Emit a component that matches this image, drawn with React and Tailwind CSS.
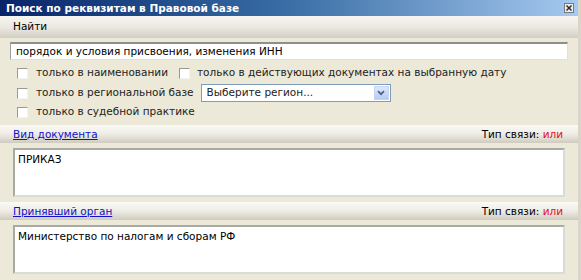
import React from "react";

const font = { fontFamily: '"DejaVu Sans", Verdana, sans-serif' };

function Check() {
  return (
    <span className="inline-block w-[11px] h-[11px] bg-white border border-t-[#9a9a94] border-l-[#9a9a94] border-b-[#f4f3ee] border-r-[#f4f3ee] shrink-0" />
  );
}

function SectionHeader({ title }) {
  return (
    <div className="h-[18px] shrink-0 flex items-center justify-between pl-[13px] pr-[15px] bg-gradient-to-b from-[#fbfaf7] via-[#eeece4] to-[#cfcbbf]">
      <a className="text-[#1010cc] underline text-[10.5px] leading-none">{title}</a>
      <span className="text-[10.5px] leading-none text-black">
        Тип связи: <span className="text-[#e0101c]">или</span>
      </span>
    </div>
  );
}

function Area({ text }) {
  return (
    <div className="ml-[13px] mr-[13px] h-[49px] shrink-0 bg-white border-2 border-t-[#a7aaa5] border-l-[#a7aaa5] border-b-[#d8dcd8] border-r-[#d8dcd8] px-[3px] pt-[3px] text-[10.5px] leading-[13px] text-black">
      {text}
    </div>
  );
}

export default function App() {
  return (
    <div
      className="w-[581px] h-[280px] bg-[#ece9d8] flex flex-col overflow-hidden border-r-[3px] border-[#d9d5c9]"
      style={font}
    >
      <div className="h-[16px] shrink-0 flex items-center justify-between pl-[6px] pr-[4px] bg-gradient-to-r from-[#0a246a] via-[#3a6ea5] to-[#a6caf0]">
        <span className="text-white font-bold text-[10.5px] leading-none">Поиск по реквизитам в Правовой базе</span>
        <span className="w-[10px] h-[10px] bg-[#ececec] border border-[#7a7a7a] flex items-center justify-center">
          <svg width="6" height="6" viewBox="0 0 6 6">
            <path d="M0.5 0.5 L5.5 5.5 M5.5 0.5 L0.5 5.5" stroke="#222" strokeWidth="1.4" />
          </svg>
        </span>
      </div>
      <div className="h-[22px] shrink-0 flex items-center pl-[13px] bg-gradient-to-b from-[#f6f5f0] via-[#ebe9e1] to-[#d2cec3] text-[10.5px] text-black">
        Найти
      </div>
      <div className="mt-[4px] ml-[10px] mr-[10px] h-[18px] shrink-0 bg-white border-t-2 border-t-[#8c8f8c] border-l border-l-[#a0a0a0] border-b border-b-[#e0e0e0] border-r border-r-[#e0e0e0] flex items-center pl-[5px] text-[10.5px] text-black">
        порядок и условия присвоения, изменения ИНН
      </div>
      <div className="pl-[17px] mt-[3px] flex flex-col text-[10.5px] text-[#222] shrink-0">
        <div className="h-[20px] flex items-center">
          <Check />
          <span className="ml-[8px]">только в наименовании</span>
          <span className="ml-[11px] flex"><Check /></span>
          <span className="ml-[7px]">только в действующих документах на выбранную дату</span>
        </div>
        <div className="h-[20px] flex items-center">
          <Check />
          <span className="ml-[8px]">только в региональной базе</span>
          <div className="ml-[7px] w-[190px] h-[18px] bg-white border border-[#7f9db9] flex items-center justify-between pl-[5px] pr-[1px]">
            <span>Выберите регион...</span>
            <span className="w-[15px] h-[14px] bg-gradient-to-b from-[#dfe8fb] to-[#b7cbf3] border border-[#c7d5f5] flex items-center justify-center">
              <svg width="8" height="6" viewBox="0 0 8 6">
                <path d="M1 1.2 L4 4.2 L7 1.2" stroke="#4d6185" strokeWidth="1.7" fill="none" />
              </svg>
            </span>
          </div>
        </div>
        <div className="h-[18px] flex items-center">
          <Check />
          <span className="ml-[8px]">только в судебной практике</span>
        </div>
      </div>
      <div className="mt-[4px]">
        <SectionHeader title="Вид документа" />
      </div>
      <div className="mt-[5px]">
        <Area text="ПРИКАЗ" />
      </div>
      <div className="mt-[5px]">
        <SectionHeader title="Принявший орган" />
      </div>
      <div className="mt-[5px]">
        <Area text="Министерство по налогам и сборам РФ" />
      </div>
    </div>
  );
}
